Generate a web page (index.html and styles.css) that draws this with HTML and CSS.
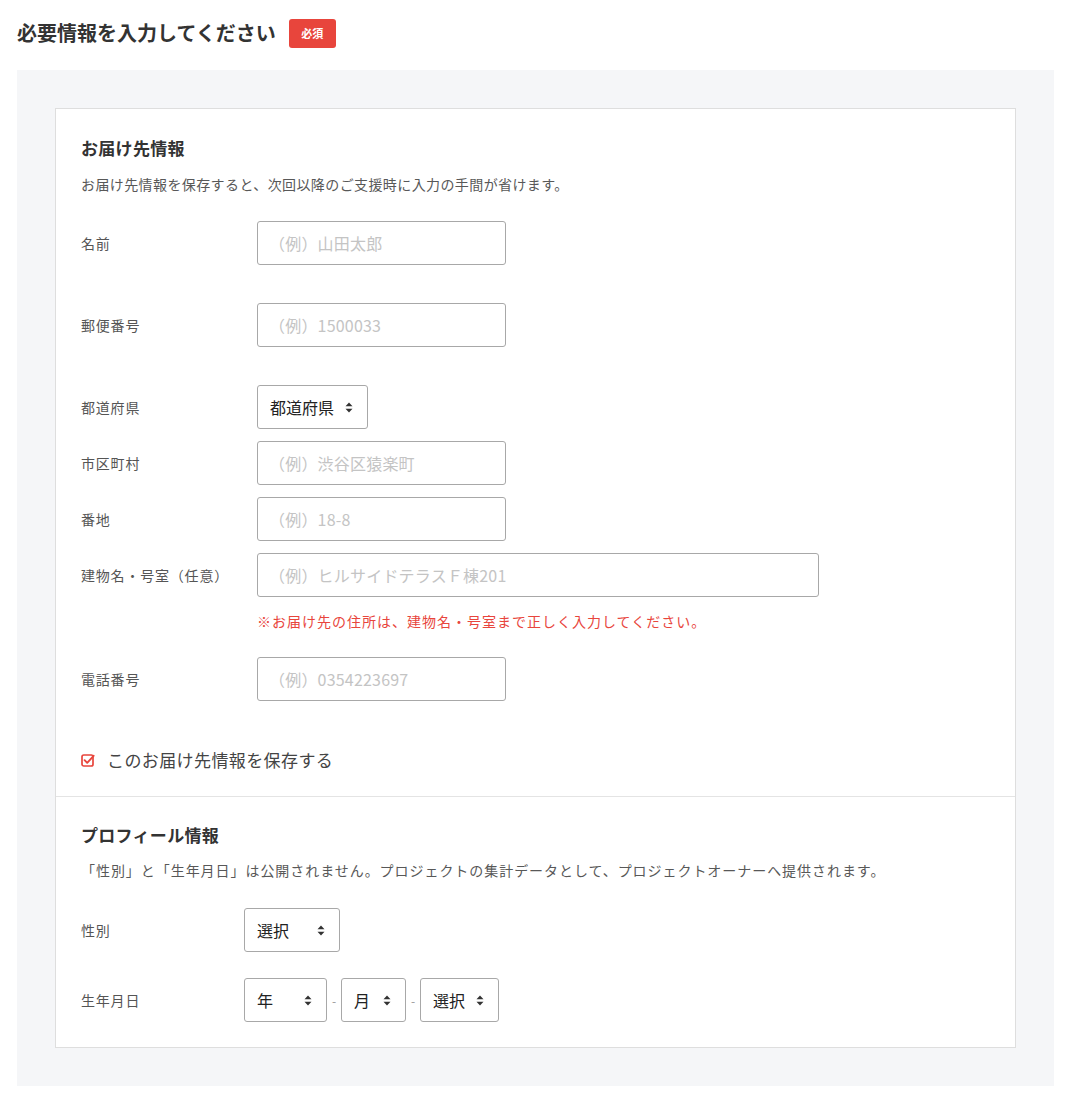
FILE: index.html
```html
<!DOCTYPE html>
<html lang="ja">
<head>
<meta charset="utf-8">
<title>必要情報を入力してください</title>
<link rel="stylesheet" href="styles.css">
</head>
<body>
<div class="page-title">
  <span class="title-text">必要情報を入力してください</span>
  <span class="badge">必須</span>
</div>
<div class="outer">
  <div class="card">
    <section class="section">
      <h2 class="sec-title">お届け先情報</h2>
      <p class="desc">お届け先情報を保存すると、次回以降のご支援時に入力の手間が省けます。</p>

      <div class="row row-first">
        <label class="label">名前</label>
        <input class="field w249" type="text" placeholder="（例）山田太郎">
      </div>
      <div class="row gap-lg">
        <label class="label">郵便番号</label>
        <input class="field w249" type="text" placeholder="（例）1500033">
      </div>
      <div class="row gap-lg">
        <label class="label">都道府県</label>
        <div class="field select w111"><span>都道府県</span><svg class="arrows" width="8" height="11" viewBox="0 0 8 11"><path d="M4 0.5 L7.5 4.2 H0.5Z M4 10.5 L0.5 6.8 H7.5Z" fill="#333"/></svg></div>
      </div>
      <div class="row gap-sm">
        <label class="label">市区町村</label>
        <input class="field w249" type="text" placeholder="（例）渋谷区猿楽町">
      </div>
      <div class="row gap-sm">
        <label class="label">番地</label>
        <input class="field w249" type="text" placeholder="（例）18-8">
      </div>
      <div class="row gap-sm">
        <label class="label">建物名・号室（任意）</label>
        <input class="field w562" type="text" placeholder="（例）ヒルサイドテラスＦ棟201">
      </div>
      <p class="note">※お届け先の住所は、建物名・号室まで正しく入力してください。</p>
      <div class="row gap-note">
        <label class="label">電話番号</label>
        <input class="field w249" type="text" placeholder="（例）0354223697">
      </div>
      <div class="check-row">
        <svg class="check-icon" width="14" height="14" viewBox="0 0 14 14"><rect x="1" y="2" width="11" height="11" rx="1.8" fill="none" stroke="#e8453c" stroke-width="1.7"/><path d="M3.6 7.2 L6.2 9.8 L12.6 2.8" fill="none" stroke="#e8453c" stroke-width="1.9" stroke-linecap="round" stroke-linejoin="round"/></svg>
        <span class="check-text">このお届け先情報を保存する</span>
      </div>
    </section>

    <section class="section section-2">
      <h2 class="sec-title">プロフィール情報</h2>
      <p class="desc desc-2">「性別」と「生年月日」は公開されません。プロジェクトの集計データとして、プロジェクトオーナーへ提供されます。</p>
      <div class="row row-first2">
        <label class="label label-sm">性別</label>
        <div class="field select w96"><span>選択</span><svg class="arrows" width="8" height="11" viewBox="0 0 8 11"><path d="M4 0.5 L7.5 4.2 H0.5Z M4 10.5 L0.5 6.8 H7.5Z" fill="#333"/></svg></div>
      </div>
      <div class="row gap-birth">
        <label class="label label-sm">生年月日</label>
        <div class="field select w83"><span>年</span><svg class="arrows" width="8" height="11" viewBox="0 0 8 11"><path d="M4 0.5 L7.5 4.2 H0.5Z M4 10.5 L0.5 6.8 H7.5Z" fill="#333"/></svg></div>
        <span class="dash">-</span>
        <div class="field select w65"><span>月</span><svg class="arrows" width="8" height="11" viewBox="0 0 8 11"><path d="M4 0.5 L7.5 4.2 H0.5Z M4 10.5 L0.5 6.8 H7.5Z" fill="#333"/></svg></div>
        <span class="dash">-</span>
        <div class="field select w79"><span>選択</span><svg class="arrows" width="8" height="11" viewBox="0 0 8 11"><path d="M4 0.5 L7.5 4.2 H0.5Z M4 10.5 L0.5 6.8 H7.5Z" fill="#333"/></svg></div>
      </div>
    </section>
  </div>
</div>
</body>
</html>
```

FILE: styles.css
```css
* { box-sizing: border-box; }

body {
  margin: 0;
  padding: 18px 16px 23px 17px;
  font-family: "Noto Sans CJK JP", "Noto Sans", sans-serif;
  color: #333;
  background: #fff;
}

.page-title {
  display: flex;
  align-items: center;
  gap: 13px;
  height: 30px;
  margin-bottom: 22px;
}

.title-text {
  font-size: 20px;
  font-weight: 700;
  line-height: 30px;
  color: #333;
}

.badge {
  display: flex;
  align-items: center;
  justify-content: center;
  width: 47px;
  height: 29px;
  border-radius: 3px;
  background: #e8453c;
  color: #fff;
  font-size: 11px;
  font-weight: 700;
}

.outer {
  background: #f5f6f8;
  padding: 38px;
}

.card {
  background: #fff;
  border: 1px solid #dedede;
}

.section {
  padding: 28px 25px 24px;
}

.section-2 {
  border-top: 1px solid #e4e4e4;
  padding-top: 27px;
  padding-bottom: 25px;
}

.sec-title {
  margin: 0;
  font-size: 17px;
  line-height: 22px;
  font-weight: 700;
  color: #333;
  letter-spacing: 0.3px;
}

.desc {
  margin: 15px 0 0;
  font-size: 14px;
  line-height: 20px;
  letter-spacing: 0.4px;
  color: #585858;
}

.desc-2 {
  margin-top: 14px;
  letter-spacing: 0.95px;
}

.row {
  display: flex;
  align-items: center;
}

.row-first { margin-top: 27px; }
.row-first2 { margin-top: 28px; }
.gap-lg { margin-top: 38px; }
.gap-sm { margin-top: 12px; }
.gap-note { margin-top: 26px; }
.gap-birth { margin-top: 26px; }

.label {
  width: 176px;
  flex: none;
  font-size: 14px;
  line-height: 20px;
  letter-spacing: 0.8px;
  color: #555;
}

.label-sm { width: 163px; }

.field {
  height: 44px;
  border: 1px solid #a8a8a8;
  border-radius: 3px;
  background: #fff;
  font-family: inherit;
  font-size: 16px;
  color: #333;
}

input.field {
  padding: 0 11px;
  outline: none;
  letter-spacing: 0.2px;
}

input.field::placeholder {
  color: #c4c4c4;
}

.w249 { width: 249px; }
.w562 { width: 562px; }
.w111 { width: 111px; }
.w96 { width: 96px; }
.w83 { width: 83px; }
.w65 { width: 65px; }
.w79 { width: 79px; }

.select {
  display: flex;
  align-items: center;
  justify-content: space-between;
  padding: 0 14px 0 12px;
  font-weight: 400;
  color: #222;
}

.arrows { flex: none; }

.dash {
  width: 14px;
  text-align: center;
  font-size: 12px;
  color: #999;
}

.note {
  margin: 14px 0 0 176px;
  font-size: 14px;
  line-height: 20px;
  letter-spacing: 1px;
  color: #e8453c;
}

.check-row {
  display: flex;
  align-items: center;
  gap: 12px;
  margin-top: 47px;
  height: 24px;
}

.check-icon { flex: none; }

.check-text {
  font-size: 17px;
  line-height: 24px;
  letter-spacing: 0.4px;
  color: #444;
}
```
